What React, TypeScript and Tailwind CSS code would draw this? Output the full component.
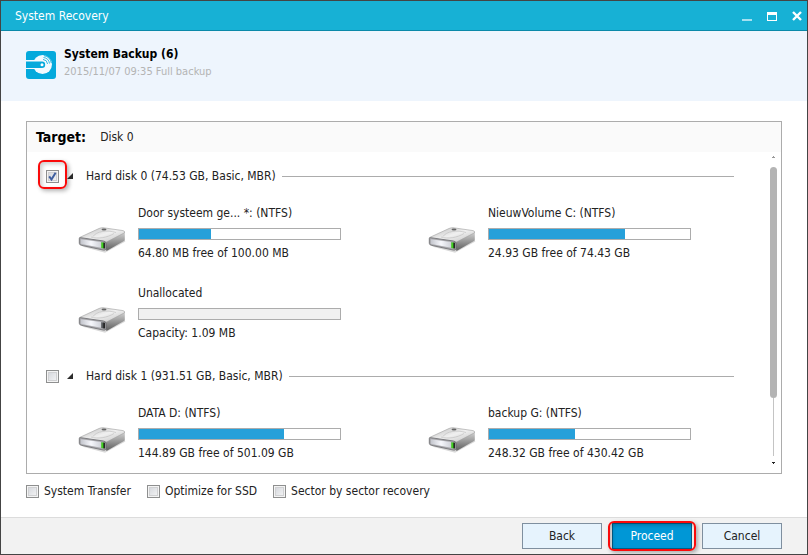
import React, { useState } from "react";
import clsx from "clsx";

type Volume = {
  name: string;
  detail: string;
  used: number; // percent of the bar, 0 when there is no file system
  allocated: boolean;
};

type Disk = {
  id: string;
  label: string;
  volumes: Volume[];
};

const disks: Disk[] = [
  {
    id: "disk-0",
    label: "Hard disk 0 (74.53 GB, Basic, MBR)",
    volumes: [
      { name: "Door systeem ge... *: (NTFS)", detail: "64.80 MB free of 100.00 MB", used: 36, allocated: true },
      { name: "NieuwVolume C: (NTFS)", detail: "24.93 GB free of 74.43 GB", used: 67.5, allocated: true },
      { name: "Unallocated", detail: "Capacity: 1.09 MB", used: 0, allocated: false },
    ],
  },
  {
    id: "disk-1",
    label: "Hard disk 1 (931.51 GB, Basic, MBR)",
    volumes: [
      { name: "DATA D: (NTFS)", detail: "144.89 GB free of 501.09 GB", used: 72, allocated: true },
      { name: "backup G: (NTFS)", detail: "248.32 GB free of 430.42 GB", used: 43, allocated: true },
    ],
  },
];

const options = ["System Transfer", "Optimize for SSD", "Sector by sector recovery"];

function Logo() {
  return (
    <svg viewBox="0 0 30 28" className="mt-[5px] h-7 w-[30px] shrink-0" aria-hidden="true">
      <rect width="30" height="28" rx="3" fill="#04a9dc" />
      <circle cx="16.500" cy="13.500" r="9.500" fill="#f2f9fe" />
      <path d="M0 9h10v9H0z" fill="#f2f9fe" />
      <path d="M0 10.500h16a3.200 3.200 0 0 1 0 6.400H0z" fill="#04a9dc" />
      <circle cx="16" cy="13.700" r="1.500" fill="#fff" />
      <path
        d="M17 8.400a5.200 5.200 0 0 1 4.600 4.600M17.500 6.500a7 7 0 0 1 6 6M18 4.700a8.800 8.800 0 0 1 7.300 7.300"
        fill="none"
        stroke="#04a9dc"
        strokeWidth="0.8"
      />
    </svg>
  );
}

function DriveIcon({ active }: { active: boolean }) {
  return (
    <svg viewBox="0 0 48 26" className="mb-2 h-[26px] w-12 shrink-0" aria-hidden="true">
      <defs>
        <linearGradient id="driveTop" x1="0" y1="0" x2="1" y2="1">
          <stop offset="0" stopColor="#b8b8b8" />
          <stop offset="0.5" stopColor="#f0f0f0" />
          <stop offset="1" stopColor="#c0c0c0" />
        </linearGradient>
        <linearGradient id="driveSide" x1="0" y1="0" x2="0" y2="1">
          <stop offset="0" stopColor="#d4d4d4" />
          <stop offset="1" stopColor="#5c5c5c" />
        </linearGradient>
        <linearGradient id="driveFront" x1="0" y1="0" x2="1" y2="0">
          <stop offset="0" stopColor="#c4c6cd" />
          <stop offset="0.5" stopColor="#f6f7fc" />
          <stop offset="1" stopColor="#cfd1d8" />
        </linearGradient>
      </defs>
      <path d="M4 19.500 27 25.800 47.500 14.500 44 12z" fill="#000" opacity="0.15" />
      <path d="M26 14.500 46.800 4.800V13.500L28.500 24z" fill="url(#driveSide)" />
      <path
        d="M1.500 10.500 21 1.500q2-.9 4-.8L45 3.600q2.200.5 1.500 2.200L29 14.800q-1.500.8-3.500.4L3 12.500z"
        fill="url(#driveTop)"
        stroke="#a0a0a0"
        strokeWidth="0.6"
      />
      <path d="M15 9.500C18 4.500 29 2.500 38 5.500M13 10c6 2 16 1 23-3.500" fill="none" stroke="#c2c2c2" strokeWidth="0.7" />
      <ellipse cx="26" cy="2.600" rx="2.500" ry="1" fill="#666" />
      <path
        d="M1.300 11.500q0-1 1.500-.8L25.500 14q2.500.3 2.500 2.500v5q0 2-2.500 1.600L3.300 18.300q-2-.5-2-2z"
        fill="#a8a8ac"
        stroke="#68686c"
        strokeWidth="0.8"
      />
      <path d="M2.800 12.200 23 15v5.800L3.300 17q-.5-.2-.5-1.200z" fill="url(#driveFront)" />
      <path d="M23.300 15.200l3 .5v5.800l-3-.6z" fill={active ? "#3fd01f" : "#55585c"} />
      <path d="M25.400 15.500l1.500.3v5.700l-1.500-.3z" fill="#1a1a1a" />
    </svg>
  );
}

type CheckBoxProps = {
  id: string;
  checked: boolean;
  onToggle: () => void;
};

function CheckBox({ id, checked, onToggle }: CheckBoxProps) {
  return (
    <span className="relative block h-[13px] w-[13px] shrink-0">
      <input
        id={id}
        type="checkbox"
        checked={checked}
        onChange={onToggle}
        className="block h-[13px] w-[13px] appearance-none border border-[#8e8f8f] bg-linear-to-br from-[#d0d3d9] to-[#f8f8f8] shadow-[inset_0_0_0_1px_#f4f4f4,inset_0_0_0_2px_#d0d1d3]"
      />
      {checked && (
        <svg viewBox="0 0 13 13" className="pointer-events-none absolute inset-0 h-[13px] w-[13px]" aria-hidden="true">
          <path d="M3.200 6.300 5.500 9.500 9.600 2.800" fill="none" stroke="#3f5f9f" strokeWidth="2" />
        </svg>
      )}
    </span>
  );
}

function VolumeItem({ volume }: { volume: Volume }) {
  return (
    <li className="flex items-end gap-3">
      <DriveIcon active={volume.allocated} />
      <div className="min-w-0 flex-1">
        <p className="truncate leading-4">{volume.name}</p>
        <div
          className={clsx(
            "mt-[7px] h-3 w-full max-w-[203px] border border-[#acacac]",
            volume.allocated ? "bg-white" : "bg-[#f0f0f0]"
          )}
        >
          <div className="h-full bg-[#26a0da]" style={{ width: `${volume.used}%` }} />
        </div>
        <p className="mt-[5px] leading-4">{volume.detail}</p>
      </div>
    </li>
  );
}

export default function App() {
  const [selected, setSelected] = useState<string[]>(["disk-0"]);
  const [collapsed, setCollapsed] = useState<string[]>([]);

  const flip = (list: string[], id: string) =>
    list.includes(id) ? list.filter((x) => x !== id) : [...list, id];
  const toggle = (id: string) => setSelected((prev) => flip(prev, id));

  return (
    <div className="flex min-h-screen flex-col border border-[#444] bg-white font-['DejaVu_Sans_Condensed','DejaVu_Sans',sans-serif] text-xs text-[#222]">
      {/* Title bar */}
      <header className="flex h-[30px] items-center justify-between border-b border-[#0a89a9] bg-[#17b1d5] pr-[5px] pl-3.5 text-white">
        <h1 className="text-xs">System Recovery</h1>
        <div className="flex items-center gap-[15px]">
          <button type="button" aria-label="Minimize">
            <svg viewBox="0 0 10 10" className="block h-2.5 w-2.5">
              <path d="M0 8h10v2H0z" fill="#a5e0f0" />
            </svg>
          </button>
          <button type="button" aria-label="Maximize">
            <svg viewBox="0 0 10 10" className="block h-2.5 w-2.5">
              <path d="M0 1h10v9H0zM1 4v5h8V4z" fill="#fff" fillRule="evenodd" />
            </svg>
          </button>
          <button type="button" aria-label="Close">
            <svg viewBox="0 0 10 10" className="block h-2.5 w-2.5">
              <path d="M1 1l8 8M9 1 1 9" stroke="#fff" strokeWidth="2.400" />
            </svg>
          </button>
        </div>
      </header>

      {/* Backup being restored */}
      <section className="flex h-[70px] items-start gap-2 bg-[#eef5fd] px-[25px] pt-[15px]">
        <Logo />
        <div>
          <h2 className="text-xs leading-4 font-bold text-black">System Backup (6)</h2>
          <p className="mt-0.5 text-[11px] leading-4 text-[#b4b4b4]">2015/11/07 09:35 Full backup</p>
        </div>
      </section>

      <main className="flex flex-1 flex-col px-[25px] pt-5">
        <section className="flex flex-1 flex-col border border-[#acacac]">
          <div className="flex h-[30px] items-center gap-3.5 bg-[#fafafa] px-[9px]">
            <h2 className="text-sm font-bold text-black">Target:</h2>
            <span>Disk 0</span>
          </div>

          <div className="flex flex-1">
            <div className="flex flex-1 flex-col gap-[27px] pt-4 pr-9 pb-[11px] pl-[19px]">
              {disks.map((disk) => (
                <div key={disk.id}>
                  <div className="flex h-4 items-center">
                    <div className="relative">
                      <CheckBox id={disk.id} checked={selected.includes(disk.id)} onToggle={() => toggle(disk.id)} />
                      {disk.id === "disk-0" && (
                        <span className="pointer-events-none absolute -inset-x-2 -top-2.5 -bottom-1.5 rounded-md border-2 border-[#fa0a0a] shadow-[2px_2px_4px_rgba(0,0,0,0.3),inset_2px_2px_4px_rgba(0,0,0,0.2)]" />
                      )}
                    </div>
                    <button
                      type="button"
                      className="ml-2 block"
                      aria-label={`Expand ${disk.label}`}
                      aria-expanded={!collapsed.includes(disk.id)}
                      onClick={() => setCollapsed((prev) => flip(prev, disk.id))}
                    >
                      <svg viewBox="0 0 6 6" className="block h-1.5 w-1.5">
                        <path d="M6 0v6H0z" fill="#2c2c2c" />
                      </svg>
                    </button>
                    <label htmlFor={disk.id} className="ml-[13px] leading-4">
                      {disk.label}
                    </label>
                    <span className="ml-1.5 h-px flex-1 bg-[#acacac]" />
                  </div>
                  {!collapsed.includes(disk.id) && (
                    <ul className="mt-[21px] grid grid-cols-2 gap-x-11 gap-y-6 pl-8">
                      {disk.volumes.map((volume) => (
                        <VolumeItem key={volume.name} volume={volume} />
                      ))}
                    </ul>
                  )}
                </div>
              ))}
            </div>

            {/* Scrollbar */}
            <div className="mr-1 flex w-[7px] flex-col items-center pt-1 pb-2" aria-hidden="true">
              <svg viewBox="0 0 3 3" className="block h-[3px] w-[3px]">
                <path d="M1 0h1v1h1v1H0V1h1z" fill="#999" />
              </svg>
              <span className="mt-2 w-full flex-4 rounded-full bg-[#b4b4b4]" />
              <span className="mb-1.5 w-px flex-1 bg-[#c4c4c4]" />
              <svg viewBox="0 0 3 3" className="block h-[3px] w-[3px]">
                <path d="M0 0h3v1H2v1H1V1H0z" fill="#222" />
              </svg>
            </div>
          </div>
        </section>

        <div className="flex items-center gap-4 pt-[9px] pb-[18px]">
          {options.map((option) => (
            <div key={option} className="flex items-center gap-[5px]">
              <CheckBox id={option} checked={selected.includes(option)} onToggle={() => toggle(option)} />
              <label htmlFor={option} className="leading-4">
                {option}
              </label>
            </div>
          ))}
        </div>
      </main>

      <footer className="flex items-start justify-end gap-2.5 border-t border-[#dcdcdc] bg-[#f2f2f2] px-[25px] pt-[5px] pb-[5px]">
        <button type="button" className="h-[26px] w-20 border border-[#7f8f9f] bg-[#e6f3fd]">
          Back
        </button>
        <div className="relative">
          <button type="button" className="block h-[26px] w-20 border border-[#00618c] bg-[#0097d6] text-white">
            Proceed
          </button>
          <span className="pointer-events-none absolute -inset-x-1 -inset-y-0.5 rounded-md border-2 border-[#fa0a0a] shadow-[2px_2px_4px_rgba(0,0,0,0.3),inset_2px_2px_4px_rgba(0,0,0,0.25)]" />
        </div>
        <button type="button" className="h-[26px] w-20 border border-[#7f8f9f] bg-[#e6f3fd]">
          Cancel
        </button>
      </footer>
    </div>
  );
}
